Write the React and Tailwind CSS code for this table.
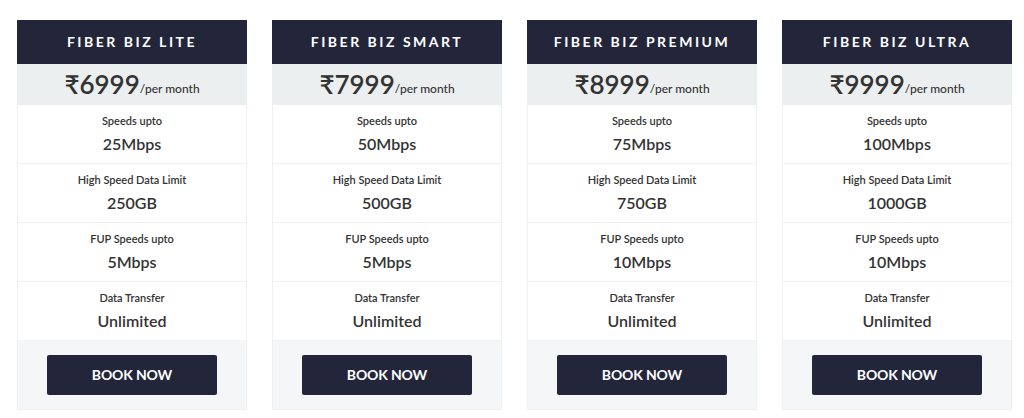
const plans = [
  { name: 'FIBER BIZ LITE', price: '6999', speed: '25Mbps', data: '250GB', fup: '5Mbps' },
  { name: 'FIBER BIZ SMART', price: '7999', speed: '50Mbps', data: '500GB', fup: '5Mbps' },
  { name: 'FIBER BIZ PREMIUM', price: '8999', speed: '75Mbps', data: '750GB', fup: '10Mbps' },
  { name: 'FIBER BIZ ULTRA', price: '9999', speed: '100Mbps', data: '1000GB', fup: '10Mbps' },
];

function Row({ label, value }) {
  return (
    <div className="h-[59px] border-b border-[#eef0f1] flex flex-col items-center pt-[9px]">
      <div className="text-[11px] leading-[14px] font-semibold text-[#333]">{label}</div>
      <div className="mt-[6px] text-[16px] leading-[20px] font-semibold text-[#333]">{value}</div>
    </div>
  );
}

function PlanCard({ plan }) {
  return (
    <div className="w-[230px] flex flex-col">
      <div className="h-[44px] bg-[#23263a] flex items-center justify-center pb-[2px] text-white text-[14px] font-bold tracking-[0.18em]">
        {plan.name}
      </div>
      <div className="h-[41px] bg-[#eceff0] flex items-end justify-center pb-[6px] text-[#333]">
        <span className="text-[26px] leading-[30px] font-semibold">₹{plan.price}</span>
        <span className="text-[12px] leading-[14px] mb-[3px] font-medium">/per month</span>
      </div>
      <div className="border-x border-[#eef0f1]">
        <Row label="Speeds upto" value={plan.speed} />
        <Row label="High Speed Data Limit" value={plan.data} />
        <Row label="FUP Speeds upto" value={plan.fup} />
        <Row label="Data Transfer" value="Unlimited" />
      </div>
      <div className="h-[69px] bg-[#f5f6f8] border-x border-b border-[#eef0f1] flex justify-center pt-[14px]">
        <button className="w-[170px] h-[40px] rounded-[2px] bg-[#23263a] text-white text-[14px] font-bold tracking-[-0.01em] pb-[2px]">
          BOOK NOW
        </button>
      </div>
    </div>
  );
}

export default function App() {
  return (
    <div className="w-[1024px] h-[418px] bg-white pl-[17px] pt-[20px] flex gap-[25px] font-['Lato','Liberation_Sans',sans-serif]">
      {plans.map((p) => (
        <PlanCard key={p.name} plan={p} />
      ))}
    </div>
  );
}
